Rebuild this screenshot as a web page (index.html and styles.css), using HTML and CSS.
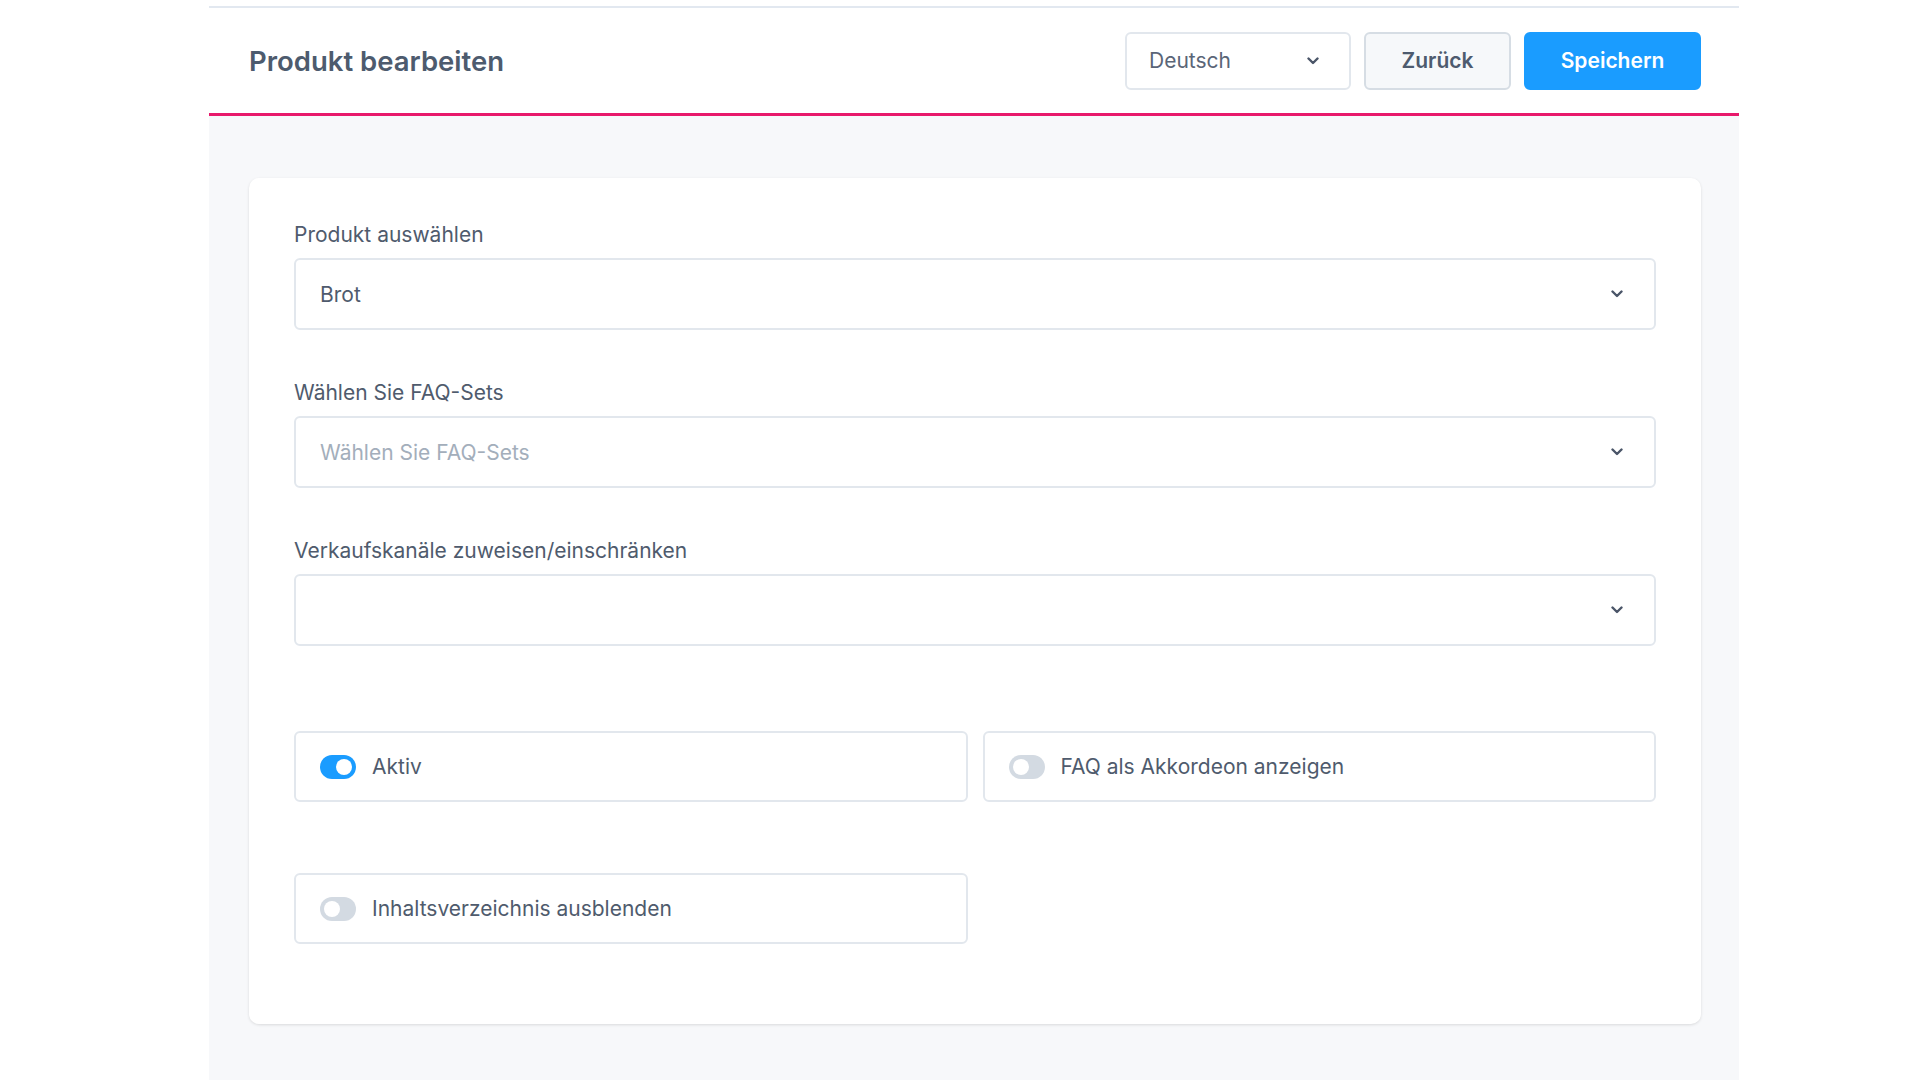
FILE: index.html
```html
<!DOCTYPE html>
<html lang="de">
<head>
<meta charset="utf-8">
<title>Produkt bearbeiten</title>
<link rel="stylesheet" href="styles.css">
</head>
<body>
<div class="page">
  <header class="header">
    <h1 class="title">Produkt bearbeiten</h1>
    <div class="actions">
      <div class="lang-select">
        <span>Deutsch</span>
        <svg class="chev" viewBox="0 0 12 8" width="12" height="8"><path d="M1.5 1.5 6 6l4.5-4.5" fill="none" stroke="#4a5568" stroke-width="2.4" stroke-linecap="round" stroke-linejoin="round"/></svg>
      </div>
      <button class="btn btn-secondary">Zurück</button>
      <button class="btn btn-primary">Speichern</button>
    </div>
  </header>
  <main class="main">
    <section class="card">
      <div class="field">
        <label class="label">Produkt auswählen</label>
        <div class="select">
          <span class="value">Brot</span>
          <svg class="chev" viewBox="0 0 12 8" width="12" height="8"><path d="M1.5 1.5 6 6l4.5-4.5" fill="none" stroke="#4a5568" stroke-width="2.4" stroke-linecap="round" stroke-linejoin="round"/></svg>
        </div>
      </div>
      <div class="field">
        <label class="label">Wählen Sie FAQ-Sets</label>
        <div class="select">
          <span class="placeholder">Wählen Sie FAQ-Sets</span>
          <svg class="chev" viewBox="0 0 12 8" width="12" height="8"><path d="M1.5 1.5 6 6l4.5-4.5" fill="none" stroke="#4a5568" stroke-width="2.4" stroke-linecap="round" stroke-linejoin="round"/></svg>
        </div>
      </div>
      <div class="field">
        <label class="label">Verkaufskanäle zuweisen/einschränken</label>
        <div class="select">
          <span class="value"></span>
          <svg class="chev" viewBox="0 0 12 8" width="12" height="8"><path d="M1.5 1.5 6 6l4.5-4.5" fill="none" stroke="#4a5568" stroke-width="2.4" stroke-linecap="round" stroke-linejoin="round"/></svg>
        </div>
      </div>
      <div class="toggles">
        <div class="toggle-box">
          <span class="switch on"><span class="knob"></span></span>
          <span class="toggle-label">Aktiv</span>
        </div>
        <div class="toggle-box">
          <span class="switch"><span class="knob"></span></span>
          <span class="toggle-label">FAQ als Akkordeon anzeigen</span>
        </div>
        <div class="toggle-box">
          <span class="switch"><span class="knob"></span></span>
          <span class="toggle-label">Inhaltsverzeichnis ausblenden</span>
        </div>
      </div>
    </section>
  </main>
</div>
</body>
</html>
```
FILE: styles.css
```css
* { box-sizing: border-box; }
html, body { margin: 0; padding: 0; background: #ffffff; }
body {
  font-family: Inter, "Noto Sans", "Liberation Sans", sans-serif;
  color: #4f5b6d;
  padding-top: 6px;
  height: 1080px;
  overflow: hidden;
}
.page {
  margin-left: 209px;
  width: 1530px;
  display: flex;
  flex-direction: column;
  height: 1074px;
}
.header {
  border-top: 2px solid #e2e8f0;
  border-bottom: 3px solid #e8196b;
  height: 110px;
  display: flex;
  align-items: center;
  justify-content: space-between;
  padding: 0 38px 0 40px;
  background: #ffffff;
}
.title {
  margin: 0;
  font-size: 27.5px;
  font-weight: 600;
  color: #4d5b6e;
  letter-spacing: 0;
}
.actions {
  display: flex;
  align-items: center;
  gap: 13px;
}
.lang-select {
  width: 226px;
  height: 58px;
  border: 2px solid #e2e7ed;
  border-radius: 6px;
  display: flex;
  align-items: center;
  justify-content: space-between;
  padding: 0 30px 0 22px;
  font-size: 21px;
  color: #5a6577;
  background: #fff;
}
.btn {
  height: 58px;
  border-radius: 6px;
  font-family: inherit;
  font-size: 21px;
  font-weight: 600;
  padding: 0;
  cursor: pointer;
}
.btn-secondary {
  width: 147px;
  background: #f6f8fa;
  border: 2px solid #d6dde4;
  color: #4d5b6e;
}
.btn-primary {
  width: 177px;
  background: #1a9cff;
  border: 2px solid #1a9cff;
  color: #ffffff;
}
.main {
  flex: 1;
  background: #f7f8fa;
  padding: 62px 38px 0 40px;
}
.card {
  background: #ffffff;
  border-radius: 10px;
  box-shadow: 0 1px 3px rgba(0, 0, 0, 0.12);
  padding: 44px 45px 80px 45px;
}
.field {
  margin-bottom: 50px;
}
.field:nth-child(3) {
  margin-bottom: 0;
}
.label {
  display: block;
  font-size: 21px;
  line-height: 26px;
  margin-bottom: 10px;
  color: #4f5b6d;
}
.select {
  height: 72px;
  border: 2px solid #e2e7ed;
  border-radius: 6px;
  display: flex;
  align-items: center;
  justify-content: space-between;
  padding: 0 31px 0 24px;
  font-size: 21px;
}
.value { color: #4f5b6d; }
.placeholder { color: #a3aebb; }
.chev { display: block; flex: none; }
.toggles {
  margin-top: 85px;
  display: grid;
  grid-template-columns: 1fr 1fr;
  column-gap: 15px;
  row-gap: 71px;
}
.toggle-box {
  height: 71px;
  border: 2px solid #e2e7ed;
  border-radius: 6px;
  display: flex;
  align-items: center;
  padding: 0 24px;
  gap: 16px;
}
.switch {
  width: 36px;
  height: 24px;
  border-radius: 12px;
  background: #d3dae2;
  display: flex;
  align-items: center;
  padding: 0 4px;
  flex: none;
}
.switch.on {
  background: #1a9cff;
  justify-content: flex-end;
}
.knob {
  width: 16px;
  height: 16px;
  border-radius: 50%;
  background: #ffffff;
}
.toggle-label {
  font-size: 21px;
  color: #4f5b6d;
}
```
